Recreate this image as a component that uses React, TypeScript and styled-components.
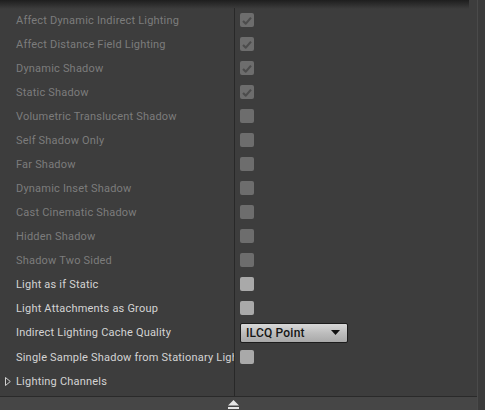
import React from "react";
import styled, { createGlobalStyle } from "styled-components";

const Global = createGlobalStyle`
  html, body { margin: 0; padding: 0; background: #3d3d3d; }
  body { font-family: Roboto, "Liberation Sans", sans-serif; }
`;

const Frame = styled.div`
  width: 485px;
  height: 410px;
  display: grid;
  grid-template-columns: 477px 1fr;
  grid-template-rows: 396px 14px;
  background: #3d3d3d;
  overflow: hidden;
  position: relative;
`;

const TopShade = styled.div`
  position: absolute;
  left: 0;
  top: 0;
  width: 469px;
  height: 9px;
  background: linear-gradient(#1e1e1e, #2a2a2a 40%, rgba(61, 61, 61, 0));
  pointer-events: none;
`;

const Panel = styled.div`
  padding-top: 8px;
  display: flex;
  flex-direction: column;
`;

const Table = styled.div`
  flex: 1;
  display: grid;
  grid-template-columns: 234px 1fr;
  grid-auto-rows: min-content;
  background: linear-gradient(90deg, #3d3d3d 234px, #282828 234px, #282828 235px, #3d3d3d 235px);
`;

const Name = styled.div<{ $enabled?: boolean; $tall?: boolean }>`
  height: ${(p) => (p.$tall ? 25 : 24)}px;
  display: flex;
  align-items: center;
  padding-left: 16px;
  position: relative;
  font-size: 11px;
  letter-spacing: 0.2px;
  color: ${(p) => (p.$enabled ? "#d4d4d4" : "#7c7c7c")};
  white-space: nowrap;
  overflow: hidden;
`;

const Value = styled.div<{ $tall?: boolean }>`
  height: ${(p) => (p.$tall ? 25 : 24)}px;
  display: flex;
  align-items: center;
  padding-left: 6px;
`;

const Box = styled.div<{ $enabled?: boolean }>`
  width: 14px;
  height: 14px;
  border-radius: 2px;
  background: ${(p) => (p.$enabled ? "#a9a9a9" : "#6d6d6d")};
  display: flex;
  align-items: center;
  justify-content: center;
`;

const Disclosure = styled.svg`
  position: absolute;
  left: 5px;
  top: 8px;
`;

const Combo = styled.div`
  width: 106px;
  height: 18px;
  box-sizing: content-box;
  border: 1px solid #1c1c1c;
  border-radius: 2px;
  background: linear-gradient(#d8d8d8, #bdbdbd 50%, #a9a9a9);
  display: flex;
  align-items: center;
  justify-content: space-between;
  font-size: 12px;
  font-weight: 500;
  letter-spacing: 0.2px;
  color: #151515;
`;

const ComboText = styled.span`
  padding-left: 5px;
`;

const ComboArrow = styled.svg`
  margin-right: 7px;
`;

const RightStrip = styled.div`
  border-left: 1px solid #4a4a4a;
  background: #3b3b3b;
  grid-row: 1 / span 2;
  grid-column: 2;
`;

const Footer = styled.div`
  border-top: 1px solid #2a2a2a;
  background: #464646;
  display: flex;
  justify-content: center;
  align-items: center;
`;

const EjectIcon = styled.svg`
  margin-left: -10px;
  margin-top: 1px;
`;

type Row = { label: string; enabled?: boolean; checked?: boolean; kind?: "check" | "combo" | "group" };

const rows: Row[] = [
  { label: "Affect Dynamic Indirect Lighting", checked: true },
  { label: "Affect Distance Field Lighting", checked: true },
  { label: "Dynamic Shadow", checked: true },
  { label: "Static Shadow", checked: true },
  { label: "Volumetric Translucent Shadow" },
  { label: "Self Shadow Only" },
  { label: "Far Shadow" },
  { label: "Dynamic Inset Shadow" },
  { label: "Cast Cinematic Shadow" },
  { label: "Hidden Shadow" },
  { label: "Shadow Two Sided" },
  { label: "Light as if Static", enabled: true },
  { label: "Light Attachments as Group", enabled: true },
  { label: "Indirect Lighting Cache Quality", enabled: true, kind: "combo" },
  { label: "Single Sample Shadow from Stationary Lights", enabled: true },
  { label: "Lighting Channels", enabled: true, kind: "group" },
];

const Check = () => (
  <svg width="10" height="9" viewBox="0 0 10 9">
    <path d="M1 5 L3.8 7.6 L9 1.6" fill="none" stroke="#4c4c4c" strokeWidth="2.2" strokeLinejoin="round" />
  </svg>
);

export default function App() {
  return (
    <>
      <Global />
      <Frame>
        <Panel>
          <Table>
            {rows.map((r) => {
              const tall = r.kind === "combo";
              return (
                <React.Fragment key={r.label}>
                  <Name $enabled={r.enabled} $tall={tall}>
                    {r.kind === "group" && (
                      <Disclosure width="6" height="9" viewBox="0 0 6 9">
                        <path d="M0.5 0.5 L5.3 4.5 L0.5 8.5 Z" fill="none" stroke="#d0d0d0" strokeWidth="1" />
                      </Disclosure>
                    )}
                    {r.label}
                  </Name>
                  <Value $tall={tall}>
                    {r.kind === "combo" ? (
                      <Combo>
                        <ComboText>ILCQ Point</ComboText>
                        <ComboArrow width="9" height="5" viewBox="0 0 9 5">
                          <path d="M0 0 H9 L4.5 5 Z" fill="#111" />
                        </ComboArrow>
                      </Combo>
                    ) : r.kind === "group" ? null : (
                      <Box $enabled={r.enabled}>{r.checked && <Check />}</Box>
                    )}
                  </Value>
                </React.Fragment>
              );
            })}
          </Table>
        </Panel>
        <RightStrip />
        <Footer>
          <EjectIcon width="11" height="9" viewBox="0 0 11 9">
            <path d="M5.5 0 L11 5.5 H0 Z" fill="#e6e6e6" />
            <rect x="0" y="7" width="11" height="2" fill="#e6e6e6" />
          </EjectIcon>
        </Footer>
        <TopShade />
      </Frame>
    </>
  );
}
